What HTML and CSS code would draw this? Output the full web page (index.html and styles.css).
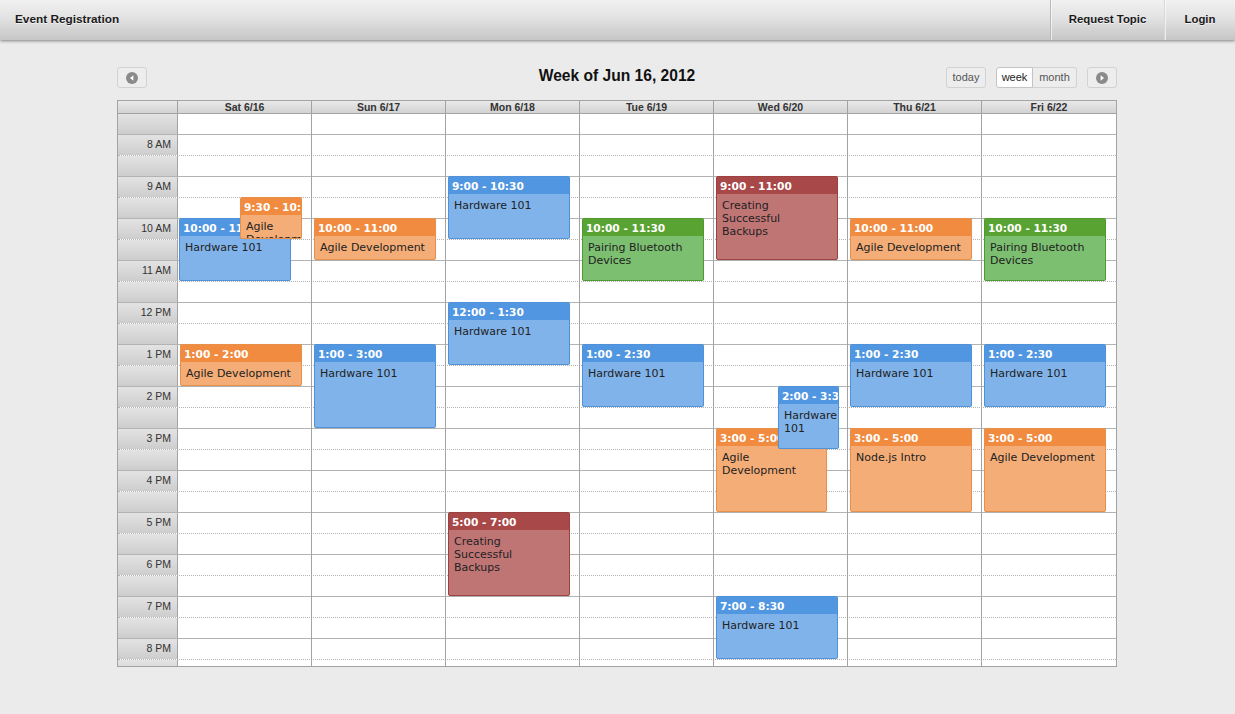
FILE: index.html
```html
<!DOCTYPE html>
<html>
<head>
<meta charset="utf-8">
<title>Event Registration</title>
<link rel="stylesheet" href="styles.css">
</head>
<body>
<header class="topbar">
  <div class="brand">Event Registration</div>
  <nav class="nav">
    <a class="nav-item nav-wide">Request Topic</a>
    <a class="nav-item">Login</a>
  </nav>
</header>

<main class="calendar">
  <div class="toolbar">
    <div class="tb-left">
      <button class="btn btn-icon" aria-label="prev">
        <svg width="12" height="12" viewBox="0 0 12 12"><circle cx="6" cy="6" r="6" fill="#8a8a8a"/><path d="M7.4 3.2 L4 6 L7.4 8.8 Z" fill="#fff"/></svg>
      </button>
    </div>
    <h1 class="tb-title">Week of Jun 16, 2012</h1>
    <div class="tb-right">
      <button class="btn btn-today">today</button>
      <div class="btn-group">
        <button class="btn btn-active">week</button><button class="btn">month</button>
      </div>
      <button class="btn btn-icon" aria-label="next">
        <svg width="12" height="12" viewBox="0 0 12 12"><circle cx="6" cy="6" r="6" fill="#8a8a8a"/><path d="M4.6 3.2 L8 6 L4.6 8.8 Z" fill="#fff"/></svg>
      </button>
    </div>
  </div>

  <div class="grid">
    <div class="head-row">
      <div class="corner"></div>
      <div class="day-head">Sat 6/16</div>
      <div class="day-head">Sun 6/17</div>
      <div class="day-head">Mon 6/18</div>
      <div class="day-head">Tue 6/19</div>
      <div class="day-head">Wed 6/20</div>
      <div class="day-head">Thu 6/21</div>
      <div class="day-head last">Fri 6/22</div>
    </div>

    <div class="body">
      <div class="slots">
        <div class="slot half"><div class="gut"></div><div class="fill"></div></div>
        <div class="slot hour"><div class="gut">8 AM</div><div class="fill"></div></div>
        <div class="slot half"><div class="gut"></div><div class="fill"></div></div>
        <div class="slot hour"><div class="gut">9 AM</div><div class="fill"></div></div>
        <div class="slot half"><div class="gut"></div><div class="fill"></div></div>
        <div class="slot hour"><div class="gut">10 AM</div><div class="fill"></div></div>
        <div class="slot half"><div class="gut"></div><div class="fill"></div></div>
        <div class="slot hour"><div class="gut">11 AM</div><div class="fill"></div></div>
        <div class="slot half"><div class="gut"></div><div class="fill"></div></div>
        <div class="slot hour"><div class="gut">12 PM</div><div class="fill"></div></div>
        <div class="slot half"><div class="gut"></div><div class="fill"></div></div>
        <div class="slot hour"><div class="gut">1 PM</div><div class="fill"></div></div>
        <div class="slot half"><div class="gut"></div><div class="fill"></div></div>
        <div class="slot hour"><div class="gut">2 PM</div><div class="fill"></div></div>
        <div class="slot half"><div class="gut"></div><div class="fill"></div></div>
        <div class="slot hour"><div class="gut">3 PM</div><div class="fill"></div></div>
        <div class="slot half"><div class="gut"></div><div class="fill"></div></div>
        <div class="slot hour"><div class="gut">4 PM</div><div class="fill"></div></div>
        <div class="slot half"><div class="gut"></div><div class="fill"></div></div>
        <div class="slot hour"><div class="gut">5 PM</div><div class="fill"></div></div>
        <div class="slot half"><div class="gut"></div><div class="fill"></div></div>
        <div class="slot hour"><div class="gut">6 PM</div><div class="fill"></div></div>
        <div class="slot half"><div class="gut"></div><div class="fill"></div></div>
        <div class="slot hour"><div class="gut">7 PM</div><div class="fill"></div></div>
        <div class="slot half"><div class="gut"></div><div class="fill"></div></div>
        <div class="slot hour"><div class="gut">8 PM</div><div class="fill"></div></div>
        <div class="slot half"><div class="gut"></div><div class="fill"></div></div>
      </div>

      <div class="days">
        <div class="day">
          <div class="ev blue" style="top:104px;height:63px;left:1px;width:112px"><div class="ev-time">10:00 - 11:30</div><div class="ev-title">Hardware 101</div></div>
          <div class="ev orange" style="top:83px;height:42px;left:62px;width:62px"><div class="ev-time">9:30 - 10:30</div><div class="ev-title">Agile Development</div></div>
          <div class="ev orange" style="top:230px;height:42px;left:2px;width:122px"><div class="ev-time">1:00 - 2:00</div><div class="ev-title">Agile Development</div></div>
        </div>
        <div class="day">
          <div class="ev orange" style="top:104px;height:42px;left:2px;width:122px"><div class="ev-time">10:00 - 11:00</div><div class="ev-title">Agile Development</div></div>
          <div class="ev blue" style="top:230px;height:84px;left:2px;width:122px"><div class="ev-time">1:00 - 3:00</div><div class="ev-title">Hardware 101</div></div>
        </div>
        <div class="day">
          <div class="ev blue" style="top:62px;height:63px;left:2px;width:122px"><div class="ev-time">9:00 - 10:30</div><div class="ev-title">Hardware 101</div></div>
          <div class="ev blue" style="top:188px;height:63px;left:2px;width:122px"><div class="ev-time">12:00 - 1:30</div><div class="ev-title">Hardware 101</div></div>
          <div class="ev red" style="top:398px;height:84px;left:2px;width:122px"><div class="ev-time">5:00 - 7:00</div><div class="ev-title">Creating Successful Backups</div></div>
        </div>
        <div class="day">
          <div class="ev green" style="top:104px;height:63px;left:2px;width:122px"><div class="ev-time">10:00 - 11:30</div><div class="ev-title">Pairing Bluetooth Devices</div></div>
          <div class="ev blue" style="top:230px;height:63px;left:2px;width:122px"><div class="ev-time">1:00 - 2:30</div><div class="ev-title">Hardware 101</div></div>
        </div>
        <div class="day">
          <div class="ev red" style="top:62px;height:84px;left:2px;width:122px"><div class="ev-time">9:00 - 11:00</div><div class="ev-title">Creating Successful Backups</div></div>
          <div class="ev orange" style="top:314px;height:84px;left:2px;width:111px"><div class="ev-time">3:00 - 5:00</div><div class="ev-title">Agile Development</div></div>
          <div class="ev blue" style="top:272px;height:63px;left:64px;width:61px"><div class="ev-time">2:00 - 3:30</div><div class="ev-title">Hardware 101</div></div>
          <div class="ev blue" style="top:482px;height:63px;left:2px;width:122px"><div class="ev-time">7:00 - 8:30</div><div class="ev-title">Hardware 101</div></div>
        </div>
        <div class="day">
          <div class="ev orange" style="top:104px;height:42px;left:2px;width:122px"><div class="ev-time">10:00 - 11:00</div><div class="ev-title">Agile Development</div></div>
          <div class="ev blue" style="top:230px;height:63px;left:2px;width:122px"><div class="ev-time">1:00 - 2:30</div><div class="ev-title">Hardware 101</div></div>
          <div class="ev orange" style="top:314px;height:84px;left:2px;width:122px"><div class="ev-time">3:00 - 5:00</div><div class="ev-title">Node.js Intro</div></div>
        </div>
        <div class="day last">
          <div class="ev green" style="top:104px;height:63px;left:2px;width:122px"><div class="ev-time">10:00 - 11:30</div><div class="ev-title">Pairing Bluetooth Devices</div></div>
          <div class="ev blue" style="top:230px;height:63px;left:2px;width:122px"><div class="ev-time">1:00 - 2:30</div><div class="ev-title">Hardware 101</div></div>
          <div class="ev orange" style="top:314px;height:84px;left:2px;width:122px"><div class="ev-time">3:00 - 5:00</div><div class="ev-title">Agile Development</div></div>
        </div>
      </div>
    </div>
  </div>
</main>
</body>
</html>
```

FILE: styles.css
```css
* { box-sizing: border-box; }

html, body {
  margin: 0;
  padding: 0;
}

body {
  background: #ebebeb;
  font-family: "Liberation Sans", Arial, sans-serif;
  color: #222;
  height: 714px;
  overflow: hidden;
}

/* top bar */
.topbar {
  height: 40px;
  display: flex;
  align-items: stretch;
  justify-content: space-between;
  background: linear-gradient(#f1f1f1, #e2e2e2 45%, #c6c6c6);
  box-shadow: 0 1px 3px rgba(0,0,0,0.45);
  position: relative;
  z-index: 2;
}

.brand {
  display: flex;
  align-items: center;
  padding-left: 15px;
  padding-bottom: 3px;
  font-weight: bold;
  font-size: 11.8px;
  color: #1a1a1a;
  text-shadow: 0 1px 0 rgba(255,255,255,0.7);
}

.nav {
  display: flex;
}

.nav-item {
  display: flex;
  align-items: center;
  justify-content: center;
  padding: 0 0 3px 0;
  font-weight: bold;
  font-size: 11.4px;
  color: #1a1a1a;
  text-shadow: 0 1px 0 rgba(255,255,255,0.7);
  border-left: 1px solid #b9b9b9;
  box-shadow: inset 1px 0 0 rgba(255,255,255,0.6);
}

.nav-wide {
  width: 114px;
}

.nav-item:last-child {
  width: 71px;
  border-left-color: #d8d8d8;
}

/* calendar */
.calendar {
  width: 1000px;
  margin: 27px 0 0 117px;
}

.toolbar {
  height: 21px;
  display: flex;
  align-items: center;
  justify-content: space-between;
  position: relative;
  margin-bottom: 12px;
}

.tb-left, .tb-right {
  display: flex;
  align-items: center;
  gap: 10px;
  height: 21px;
}

.tb-title {
  position: absolute;
  left: 0;
  right: 0;
  top: 0;
  margin: 0;
  text-align: center;
  font-size: 15.6px;
  line-height: 17px;
  font-weight: bold;
  color: #111;
  pointer-events: none;
}

.btn {
  height: 21px;
  padding: 0 7px;
  border: 1px solid #d2d2d2;
  border-radius: 3px;
  background: #ededed;
  font-family: "Liberation Sans", Arial, sans-serif;
  font-size: 11px;
  color: #555;
  line-height: 19px;
  margin: 0;
}

.btn-today {
  width: 40px;
  padding: 0;
}

.btn-icon {
  width: 30px;
  padding: 0;
  display: flex;
  align-items: center;
  justify-content: center;
}

.btn-group {
  display: flex;
}

.btn-group .btn {
  border-radius: 0;
}

.btn-group .btn:first-child {
  border-radius: 3px 0 0 3px;
  width: 37px;
  padding: 0;
}

.btn-group .btn:last-child {
  border-radius: 0 3px 3px 0;
  border-left: none;
  width: 44px;
  padding: 0;
}

.btn-active {
  background: #fff;
  color: #222;
  border-color: #c4c4c4;
}

/* grid */
.grid {
  border: 1px solid #a3a3a3;
  background: #fff;
}

.head-row {
  display: flex;
  height: 13px;
  border-bottom: 1px solid #a3a3a3;
  background: linear-gradient(#e9e9e9, #d3d3d3);
}

.corner {
  width: 60px;
  border-right: 1px solid #a3a3a3;
}

.day-head {
  width: 134px;
  border-right: 1px solid #a3a3a3;
  font-size: 10.5px;
  font-weight: bold;
  color: #333;
  text-align: center;
  line-height: 12px;
}

.day-head.last {
  border-right: none;
}

.body {
  position: relative;
  height: 552px;
  overflow: hidden;
}

.slots {
  display: flex;
  flex-direction: column;
}

.slot {
  display: flex;
  height: 21px;
  border-bottom: 1px solid #b3b3b3;
}

.slot.hour {
  border-bottom: 1px dotted #b3b3b3;
}

.gut {
  width: 60px;
  border-right: 1px solid #a3a3a3;
  background: linear-gradient(#e3e3e3, #cdcdcd);
  font-size: 10.5px;
  color: #333;
  text-align: right;
  padding-right: 6px;
  line-height: 19px;
}

.fill {
  flex: 1;
}

.days {
  position: absolute;
  top: 0;
  left: 60px;
  right: 0;
  bottom: 0;
  display: flex;
}

.day {
  width: 134px;
  border-right: 1px solid #a3a3a3;
  position: relative;
}

.day.last {
  border-right: none;
}

/* events */
.ev {
  position: absolute;
  border: 1px solid;
  border-radius: 2px;
  overflow: hidden;
  font-family: "DejaVu Sans", Verdana, sans-serif;
  font-size: 11px;
  box-shadow: 0 0 1px rgba(0,0,0,0.15);
}

.ev-time {
  height: 17px;
  line-height: 18px;
  padding-left: 3px;
  font-size: 10.6px;
  font-weight: bold;
  color: #fff;
  white-space: nowrap;
  overflow: hidden;
}

.ev-title {
  padding: 5px 8px 0 5px;
  line-height: 13px;
  color: #222;
}

.blue { background: #80b3ea; border-color: #4f92da; }
.blue .ev-time { background: #5196e1; }

.orange { background: #f5ad77; border-color: #e6904a; }
.orange .ev-time { background: #f08b40; }

.green { background: #7cbf70; border-color: #4f9a2d; }
.green .ev-time { background: #58a332; }

.red { background: #c07575; border-color: #9c4040; }
.red .ev-time { background: #a84848; }
```
